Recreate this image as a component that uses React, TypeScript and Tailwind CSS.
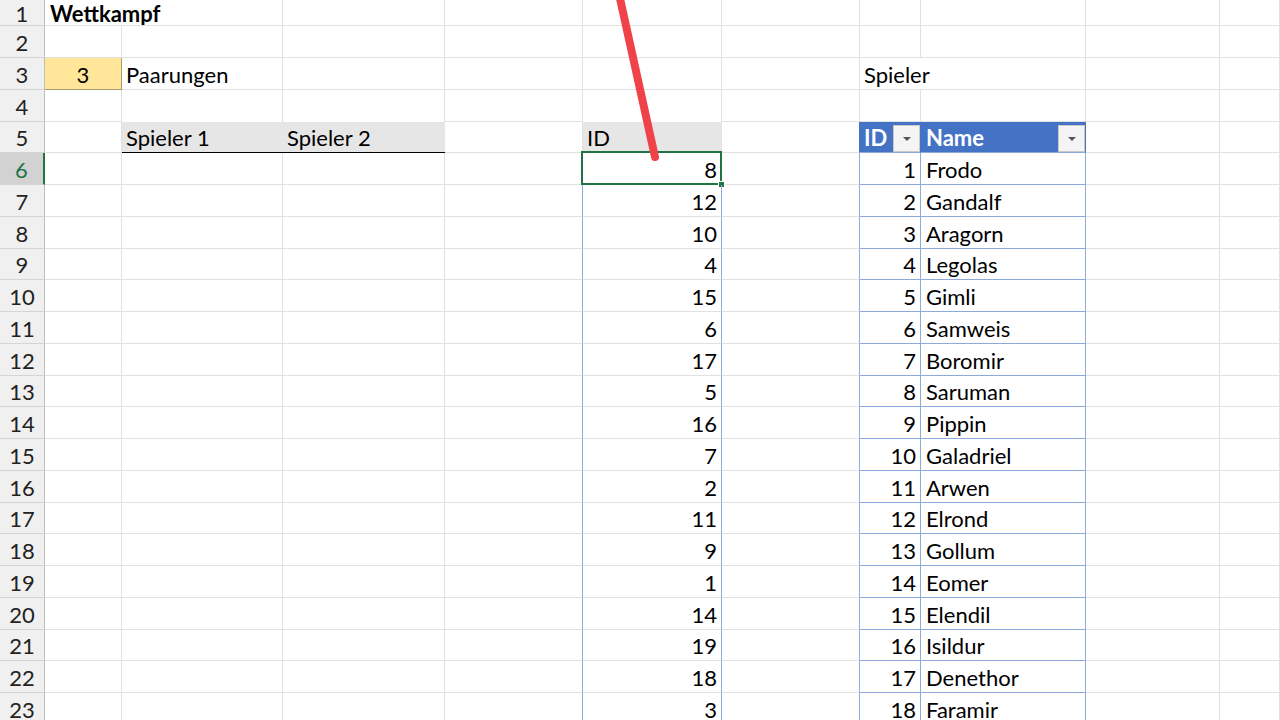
import React from 'react';

const ids = [8, 12, 10, 4, 15, 6, 17, 5, 16, 7, 2, 11, 9, 1, 14, 19, 18, 3];
const players = [
  'Frodo',
  'Gandalf',
  'Aragorn',
  'Legolas',
  'Gimli',
  'Samweis',
  'Boromir',
  'Saruman',
  'Pippin',
  'Galadriel',
  'Arwen',
  'Elrond',
  'Gollum',
  'Eomer',
  'Elendil',
  'Isildur',
  'Denethor',
  'Faramir',
];

const grid = 'border-r border-b border-[#e1e1e1]';

function FilterButton() {
  return (
    <div className="absolute right-0 top-[3px] flex h-[27px] w-[27px] items-center justify-center border border-[#c9c9c9] bg-[#f4f4f4]">
      <svg width="10" height="6" viewBox="0 0 10 6">
        <path d="M1 1h8L5 5z" fill="#555" />
      </svg>
    </div>
  );
}

function Row({ r }: { r: number }) {
  const height = r === 1 ? 'h-[26px]' : r % 4 === 1 ? 'h-[31px]' : 'h-[32px]';
  const data = r >= 6 && r <= 23;
  const i = r - 6;
  const active = r === 6;

  return (
    <div
      className={`grid ${height} grid-cols-[45px_77px_161px_162px_138px_139px_138px_61px_165px_134px_60px]`}
    >
      {/* row header */}
      <div
        className={`flex items-center justify-center border-b border-[#d4d4d4] pt-[2px] ${
          active
            ? 'border-r-2 border-r-[#217346] bg-[#d2d2d2] text-[#217346]'
            : 'border-r border-r-[#bdbdbd] bg-[#f0f0f0] text-[#222]'
        }`}
      >
        {r}
      </div>

      {/* A */}
      <div
        className={`flex items-center overflow-visible whitespace-nowrap pt-[2px] ${
          r === 3
            ? 'justify-center border-r border-b border-[#a89b6e] bg-[#ffe699]'
            : r === 1
            ? 'border-b border-[#e1e1e1] pl-[5px] font-bold'
            : grid
        }`}
      >
        {r === 1 && 'Wettkampf'}
        {r === 3 && '3'}
      </div>

      {/* B */}
      <div
        className={`flex items-center whitespace-nowrap pl-[4px] pt-[2px] ${
          r === 5 ? 'border-b border-b-black bg-[#e7e6e6]' : r === 4 ? 'border-r border-[#e1e1e1]' : grid
        }`}
      >
        {r === 3 && 'Paarungen'}
        {r === 5 && 'Spieler 1'}
      </div>

      {/* C */}
      <div
        className={`flex items-center whitespace-nowrap pl-[4px] pt-[2px] ${
          r === 5 ? 'border-b border-b-black bg-[#e7e6e6]' : r === 4 ? 'border-r border-[#e1e1e1]' : grid
        }`}
      >
        {r === 5 && 'Spieler 2'}
      </div>

      {/* D */}
      <div className={`border-b border-[#e1e1e1] ${data ? 'border-r border-r-[#8eaadb]' : 'border-r border-r-[#e1e1e1]'}`} />

      {/* E */}
      <div
        className={`relative flex items-center whitespace-nowrap pt-[2px] ${
          r === 5
            ? 'justify-start border-b border-[#e1e1e1] bg-[#e7e6e6] pl-[4px]'
            : data
            ? 'justify-end border-r border-b border-r-[#8eaadb] border-b-[#e1e1e1] pr-[4px]'
            : r === 4
            ? 'border-r border-[#e1e1e1]'
            : grid
        }`}
      >
        {r === 5 && 'ID'}
        {data && ids[i]}
        {active && (
          <>
            <div className="absolute inset-[-2px_-1px_-1px_-2px] border-2 border-[#217346]" />
            <div className="absolute bottom-[-4px] right-[-4px] h-[7px] w-[7px] border border-white bg-[#217346]" />
          </>
        )}
      </div>

      {/* F */}
      <div
        className={`border-b border-[#e1e1e1] ${
          r === 5 ? 'border-r border-r-[#4472c4]' : data ? 'border-r border-r-[#8eaadb]' : 'border-r border-r-[#e1e1e1]'
        }`}
      />

      {/* G */}
      <div
        className={`relative flex items-center whitespace-nowrap pt-[2px] ${
          r === 5
            ? 'border-r border-b border-r-[#4472c4] border-b-[#8eaadb] bg-[#4472c4] pl-[4px] font-bold text-white'
            : data
            ? 'justify-end border-r border-b border-[#8eaadb] pr-[4px]'
            : r === 3
            ? 'border-b border-[#e1e1e1] pl-[4px]'
            : grid
        }`}
      >
        {r === 3 && 'Spieler'}
        {r === 5 && (
          <>
            ID
            <FilterButton />
          </>
        )}
        {data && i + 1}
      </div>

      {/* H */}
      <div
        className={`relative flex items-center whitespace-nowrap pl-[5px] pt-[2px] ${
          r === 5
            ? 'border-r border-b border-r-[#4472c4] border-b-[#8eaadb] bg-[#4472c4] font-bold text-white'
            : data
            ? 'border-r border-b border-[#8eaadb]'
            : grid
        }`}
      >
        {r === 5 && (
          <>
            Name
            <FilterButton />
          </>
        )}
        {data && players[i]}
      </div>

      {/* I */}
      <div className={grid} />
      {/* J */}
      <div className={grid} />
    </div>
  );
}

export default function App() {
  const rows = Array.from({ length: 23 }, (_, k) => k + 1);
  return (
    <div
      className="relative h-[720px] w-[1280px] overflow-hidden bg-white text-[22px] leading-none text-black"
      style={{ fontFamily: 'Lato, "Open Sans", sans-serif' }}
    >
      {rows.map(r => (
        <Row key={r} r={r} />
      ))}

      {/* red annotation arrow */}
      <svg className="pointer-events-none absolute left-0 top-0" width="1280" height="720">
        <line x1="619" y1="-6" x2="655" y2="157" stroke="#ef4349" strokeWidth="8" strokeLinecap="round" />
      </svg>
    </div>
  );
}
